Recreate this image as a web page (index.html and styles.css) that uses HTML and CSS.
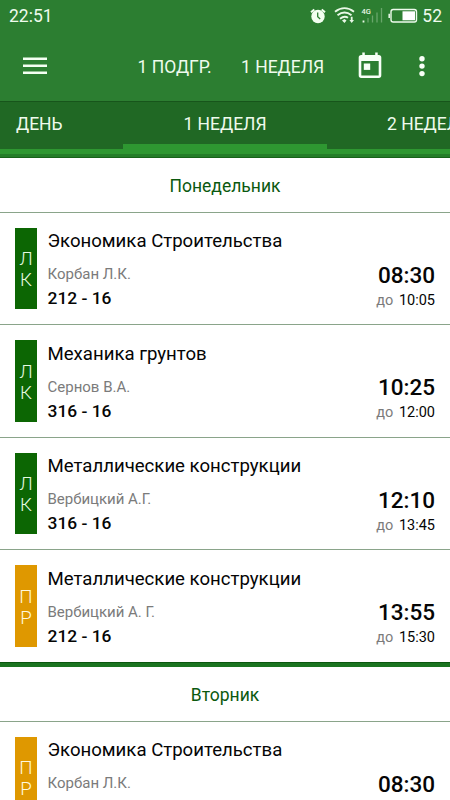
FILE: index.html
```html
<!DOCTYPE html>
<html lang="ru">
<head>
<meta charset="utf-8">
<title>Расписание</title>
<link rel="stylesheet" href="styles.css">
</head>
<body>
<header class="top">
  <div class="status">
    <span class="clock">22:51</span>
    <svg class="status-icons" width="109" height="20" viewBox="0 0 109 20">
      <circle cx="9" cy="10.5" r="6.7" fill="#f2fff0"/>
      <path d="M2 6.2 5.3 3.4M16 6.2 12.7 3.4" stroke="#f2fff0" stroke-width="2"/>
      <path d="M8.7 6.5V10.7L11.2 13" fill="none" stroke="#2c7e31" stroke-width="1.3"/>
      <path d="M26 5.700Q35.500 -1.400 45 5.700M28.500 9.200Q35.500 3.800 42.500 9.200M31 12.700Q35.500 9.200 39 11.800" fill="none" stroke="#e9f8e7" stroke-width="1.900"/>
      <path d="M33 14.600 35.500 13 37.500 14.600 35.500 17ZM41.800 10.800H43.600V14H45L42.700 17 40.400 14H41.800Z" fill="#e9f8e7"/>
      <text class="network" x="52.500" y="8">4G</text>
      <path d="M54.500 16.500V14.500" stroke="#e9f8e7" stroke-width="1.800"/>
      <path d="M59 16.500V12M63.500 16.500V9.500M68 16.500V6.500M72.500 16.500V2" stroke="#69a66b" stroke-width="1.300"/>
      <rect x="82" y="3.500" width="25.500" height="12.500" rx="2.200" fill="none" stroke="#eefbed" stroke-width="1.400"/>
      <path d="M80.200 7.700V11.900" stroke="#eefbed" stroke-width="1.500"/>
      <rect x="93.500" y="5.300" width="12.500" height="9" fill="#fff"/>
    </svg>
    <span class="battery">52</span>
  </div>
  <div class="toolbar">
    <svg class="menu" width="24" height="18" viewBox="0 0 24 18"><path d="M0 1.700H24M0 8.700H24M0 15.700H24" stroke="#f4fff2" stroke-width="2.600"/></svg>
    <span class="subgroup">1 ПОДГР.</span>
    <span class="week">1 НЕДЕЛЯ</span>
    <svg class="calendar" width="24" height="27" viewBox="0 0 24 27">
      <path fill="#f8fff7" fill-rule="evenodd" d="M4.300 .4H6.800V3H17.200V.4H19.700V3H20.700Q23.300 3 23.300 5.600V23.300Q23.300 26 20.700 26H3.300Q.7 26 .7 23.300V5.600Q.7 3 3.300 3H4.300ZM3.300 9V23.400H20.700V9Z"/>
      <rect x="5.800" y="11.500" width="6.400" height="6.400" fill="#f8fff7"/>
    </svg>
    <svg class="more" width="8" height="22" viewBox="0 0 8 22" fill="#f8fff7"><circle cx="4" cy="3.700" r="2.700"/><circle cx="4" cy="11.100" r="2.700"/><circle cx="4" cy="18.600" r="2.700"/></svg>
  </div>
</header>
<nav class="tabs">
  <span class="tab tab-day">ДЕНЬ</span>
  <span class="tab tab-active">1 НЕДЕЛЯ</span>
  <span class="tab tab-next">2 НЕДЕЛЯ</span>
</nav>
<div class="tab-base"></div>
<main>
  <section class="day">
    <h2 class="day-name">Понедельник</h2>
    <article class="lesson">
      <div class="kind"><span>Л</span><span>К</span></div>
      <div class="info"><h3>Экономика Строительства</h3><p class="teacher">Корбан Л.К.</p><p class="room">212 - 16</p></div>
      <div class="time"><b>08:30</b><p><span>до</span> 10:05</p></div>
    </article>
    <article class="lesson">
      <div class="kind"><span>Л</span><span>К</span></div>
      <div class="info"><h3>Механика грунтов</h3><p class="teacher">Сернов В.А.</p><p class="room">316 - 16</p></div>
      <div class="time"><b>10:25</b><p><span>до</span> 12:00</p></div>
    </article>
    <article class="lesson">
      <div class="kind"><span>Л</span><span>К</span></div>
      <div class="info"><h3>Металлические конструкции</h3><p class="teacher">Вербицкий А.Г.</p><p class="room">316 - 16</p></div>
      <div class="time"><b>12:10</b><p><span>до</span> 13:45</p></div>
    </article>
    <article class="lesson">
      <div class="kind practice"><span>П</span><span>Р</span></div>
      <div class="info"><h3>Металлические конструкции</h3><p class="teacher">Вербицкий А. Г.</p><p class="room">212 - 16</p></div>
      <div class="time"><b>13:55</b><p><span>до</span> 15:30</p></div>
    </article>
  </section>
  <div class="day-divider"></div>
  <section class="day">
    <h2 class="day-name">Вторник</h2>
    <article class="lesson">
      <div class="kind practice"><span>П</span><span>Р</span></div>
      <div class="info"><h3>Экономика Строительства</h3><p class="teacher">Корбан Л.К.</p></div>
      <div class="time"><b>08:30</b></div>
    </article>
  </section>
</main>
</body>
</html>
```
FILE: styles.css
```css
* { box-sizing: border-box; }
body {
  margin: 0;
  width: 450px;
  height: 800px;
  overflow: hidden;
  background: #fff;
  color: #050505;
  font-family: Roboto, "Noto Sans", sans-serif;
}
h2, h3, p { margin: 0; font-weight: 400; }
svg { display: block; flex: none; }
.top { height: 101px; background: #2c7e31; color: #effbed; }
.status { height: 32px; display: flex; padding: 0 8px 0 9px; line-height: 32px; }
.clock { font-size: 17.5px; }
.status-icons { margin: 6px 0 0 auto; }
.network { font-size: 7.5px; fill: #e9f8e7; font-weight: 500; }
.battery { width: 24px; text-align: right; font-size: 17.5px; }
.toolbar { height: 69px; display: flex; align-items: flex-start; padding-left: 23px; font-size: 17.5px; line-height: 24px; white-space: nowrap; }
.menu { margin-top: 25px; }
.subgroup { margin: 23px 0 0 90.5px; width: 103.5px; }
.week { margin-top: 23px; width: 117px; }
.calendar { margin-top: 20px; }
.more { margin: 23px 0 0 36px; }
.tabs {
  height: 53px;
  display: grid;
  grid-template-columns: 123px 204px 123px;
  background: #206824;
  border-top: 1px solid #17551b;
  color: #effbed;
  font-size: 17.5px;
  line-height: 44px;
  overflow: hidden;
  white-space: nowrap;
}
.tab { height: 52px; border-bottom: 5px solid #2e9731; }
.tab-day { padding-left: 16px; }
.tab-active { border-bottom-width: 10px; text-align: center; }
.tab-next { padding-left: 60px; }
.tab-base { height: 4px; background: #247d28; border-bottom: 1px solid #176319; }
.day-name { height: 53.9px; line-height: 56px; font-size: 17.5px; text-align: center; color: #0b590f; }
.lesson { height: 112.5px; display: flex; padding: 15px 15px 0; border-top: 1px solid #8aa48a; }
.kind {
  width: 22px;
  height: 81.5px;
  flex: none;
  display: flex;
  flex-direction: column;
  justify-content: center;
  align-items: center;
  background: #0c6603;
  color: #e6fbe1;
  font-size: 18.75px;
  font-weight: 300;
  line-height: 21px;
  padding-top: 3px;
}
.practice { background: #df9800; color: #fff8df; }
.info { flex: 1; padding-left: 10.5px; white-space: nowrap; }
.info h3 { font-size: 18.6px; line-height: 24px; margin-top: 1.5px; }
.teacher { font-size: 15px; line-height: 20px; margin-top: 11px; color: #7b7b7b; }
.room { font-size: 17.4px; line-height: 24px; font-weight: 500; margin-top: 2px; }
.time { text-align: right; padding-top: 32px; }
.time b { display: block; font-size: 22.5px; line-height: 30px; font-weight: 500; }
.time p { font-size: 14.5px; line-height: 20px; margin-top: 1px; white-space: nowrap; }
.time span { color: #7b7b7b; margin-right: 2px; }
.day-divider { height: 5px; background: #1b7420; border-top: 1px solid #0b570f; }
```
